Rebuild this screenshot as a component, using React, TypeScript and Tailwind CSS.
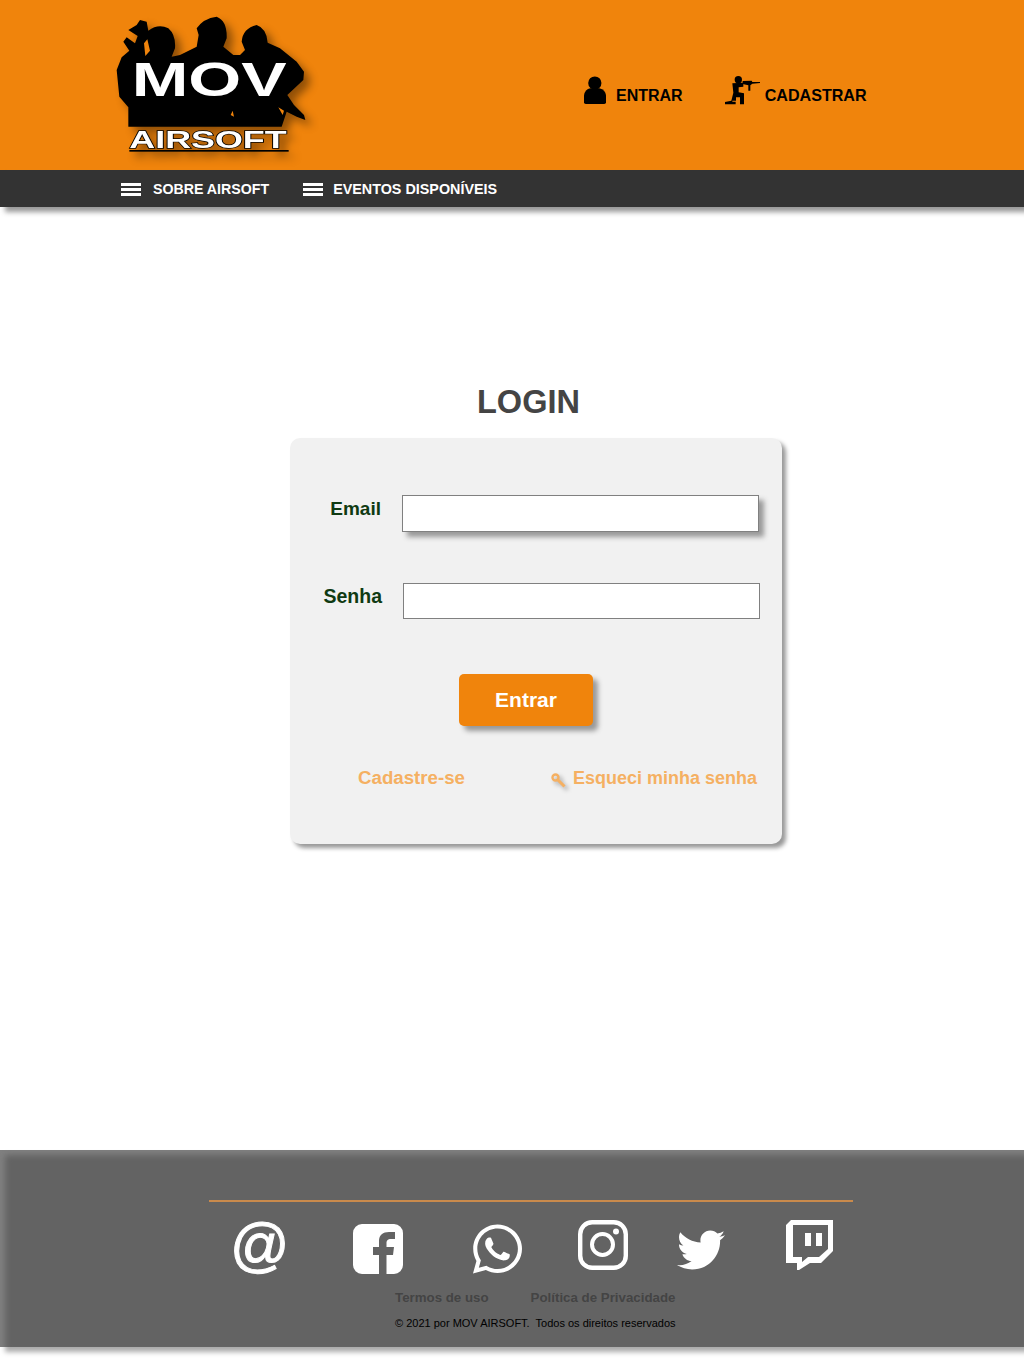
import { FaWhatsapp, FaTwitter } from "react-icons/fa";

const font = "font-['Liberation_Sans',Arial,sans-serif]";

// Logo: three soldiers in silhouette with the brand name over them
const Logo = () => (
  <svg viewBox="0 0 690 510" className="w-[230px] h-[170px] drop-shadow-[6px_6px_4px_rgba(0,0,0,0.4)]">
    <path d="M85 380 L85 322 L58 290 L50 210 L65 172 L88 152 L70 125 L80 112 L105 130 L113 108 L85 90 L110 75 L120 60 L140 65 L145 92 Q175 70 205 85 Q228 105 225 145 L215 170 L240 165 L290 140 L296 105 L290 85 Q310 55 350 50 Q382 62 380 115 L370 140 L400 165 L420 165 L435 150 L425 125 Q428 85 470 75 Q500 85 503 128 L540 145 L590 185 L612 215 L610 240 L562 285 L582 315 L612 345 L616 360 L590 350 L560 335 L545 380 Z" />
    <path d="M132 130 L142 118 L150 152 L136 168 Z M392 345 L398 332 L402 350 Z M535 322 L552 332 L548 345 Z" fill="#f0840c" />
    <text x="95" y="289" fill="#fff" fontFamily="Liberation Sans" fontWeight="700" fontSize="146" textLength="465" lengthAdjust="spacingAndGlyphs">
      MOV
    </text>
    <text x="88" y="445" fill="#fff" stroke="#000" strokeWidth="4" paintOrder="stroke" fontFamily="Liberation Sans" fontWeight="700" fontSize="70" textLength="472" lengthAdjust="spacingAndGlyphs">
      AIRSOFT
    </text>
    <rect x="88" y="450" width="478" height="5" />
  </svg>
);

const PersonIcon = () => (
  <svg viewBox="42 50 63 80" className="w-[22px] h-[28px]">
    <circle cx="73" cy="70" r="19" />
    <path d="M42 125 L42 105 Q45 88 60 85 L86 85 Q103 90 105 105 L105 125 Q105 130 100 130 L47 130 Q42 130 42 125Z" />
  </svg>
);

const SoldierIcon = () => (
  <svg viewBox="465 45 105 90" className="w-[35px] h-[30px]">
    <circle cx="505" cy="59" r="11" />
    <path d="M487 70 L520 68 L520 80 L506 82 L506 97 L522 100 L522 133 L510 133 L510 112 L498 112 L498 122 L487 122 L487 125 L497 125 L497 133 L465 133 L465 126 L484 122 L490 98 Z" />
    <path d="M518 63 L545 62 L547 66 L570 66 L570 69 L547 71 L541 76 L541 92 L535 92 L535 76 L518 72 Z" />
  </svg>
);

const KeyIcon = () => (
  <svg viewBox="0 0 16 16" className="w-4 h-4 drop-shadow-[3px_3px_2px_rgba(0,0,0,0.3)]">
    <circle cx="4.5" cy="4.5" r="3" fill="none" stroke="#f5b062" strokeWidth="2.4" />
    <path d="M6.5 6.5 L13.5 13.5" stroke="#f5b062" strokeWidth="3" />
  </svg>
);

const FacebookIcon = () => (
  <svg viewBox="0 0 50 50" className="ml-[69px] mt-[22px] w-[50px] h-[50px]">
    <path
      fill="#fff"
      fillRule="evenodd"
      d="M9 0 H41 A9 9 0 0 1 50 9 V41 A9 9 0 0 1 41 50 H9 A9 9 0 0 1 0 41 V9 A9 9 0 0 1 9 0 Z M26 50 V31 H20 V23 H26 V17 C26 11 30 8 36 8 H42 V15 H38 C34.5 15 33.5 17 33.5 19 V23 H41 L40 31 H33.5 V50 Z"
    />
  </svg>
);

const InstagramIcon = () => (
  <svg viewBox="0 0 50 50" className="ml-[56px] mt-[18px] w-[50px] h-[50px]">
    <rect x="2.2" y="2.2" width="45.6" height="45.6" rx="12" fill="none" stroke="#fff" strokeWidth="4.4" />
    <circle cx="24.5" cy="24.5" r="10.5" fill="none" stroke="#fff" strokeWidth="4" />
    <circle cx="38" cy="11.5" r="3" fill="#fff" />
  </svg>
);

const TwitchIcon = () => (
  <svg viewBox="0 0 48 50" className="ml-[61px] mt-[18px] w-[48px] h-[50px]">
    <path
      fill="#fff"
      fillRule="evenodd"
      d="M0 5 L5 0 H47 V31 L35 43 H24 L13 50 H11 V43 H0 Z M7 5 V37 H16 V42 L22 37 H33 L42 29 V5 Z"
    />
    <rect x="19" y="13" width="6" height="13" fill="#fff" />
    <rect x="30" y="13" width="6" height="13" fill="#fff" />
  </svg>
);

const Burger = () => (
  <div className="flex flex-col gap-[2px] w-5">
    <div className="h-[3px] bg-white" />
    <div className="h-[3px] bg-white" />
    <div className="h-[3px] bg-white" />
  </div>
);

export default function App() {
  return (
    <div className={`${font} w-[1024px] bg-white overflow-hidden h-[1358px]`}>
      <header className="h-[170px] bg-[#f0840c] flex items-start">
        <div className="ml-[100px]">
          <Logo />
        </div>
        <a className="ml-[254px] mt-[76px] flex items-start text-black">
          <PersonIcon />
          <span className="ml-[10px] mt-[11px] text-base leading-[18px] font-bold">ENTRAR</span>
        </a>
        <a className="ml-[42px] mt-[75px] flex items-start text-black">
          <SoldierIcon />
          <span className="ml-[5px] mt-[11px] text-[16.1px] leading-[18px] font-bold">CADASTRAR</span>
        </a>
      </header>

      <nav className="h-[37px] pt-[2px] bg-[#333333] flex items-center pl-[121px] text-white text-[14.2px] font-bold shadow-[5px_5px_5px_#999]">
        <Burger />
        <span className="ml-3">SOBRE AIRSOFT</span>
        <div className="ml-[34px]">
          <Burger />
        </div>
        <span className="ml-[10px] text-[14.35px]">EVENTOS DISPONÍVEIS</span>
      </nav>

      <main className="h-[943px] pt-[176px]">
        <h1 className="ml-[477px] text-[32.5px] leading-[38px] font-bold text-[#444444]">LOGIN</h1>
        <div className="mt-[17px] ml-[290px] w-[492px] h-[406px] bg-[#f1f1f1] rounded-[10px] shadow-[4px_4px_4px_#999] pt-[57px]">
          <div className="flex items-start">
            <label className="w-[91px] text-right text-[19px] leading-[22px] font-bold text-[#0f3a12] mt-[3px]">Email</label>
            <input type="text" className="ml-[21px] w-[357px] h-[37px] bg-white border border-[#808080] shadow-[5px_5px_5px_#999]" />
          </div>
          <div className="flex items-start mt-[51px]">
            <label className="w-[92px] text-right text-[19.5px] leading-[22px] font-bold text-[#0f3a12] mt-[2px]">Senha</label>
            <input type="password" className="ml-[21px] w-[357px] h-[36px] bg-white border border-[#808080]" />
          </div>
          <button className="block mt-[55px] ml-[169px] w-[134px] h-[52px] bg-[#f0840c] rounded-[5px] text-white text-[21px] font-bold shadow-[5px_5px_5px_#999]">
            Entrar
          </button>
          <div className="flex items-center mt-[41px] leading-[22px] font-bold text-[#f5b062]">
            <a className="ml-[68px] text-[18.7px]">Cadastre-se</a>
            <div className="ml-[86px] mt-[6px]">
              <KeyIcon />
            </div>
            <a className="ml-[6px] text-[18px]">Esqueci minha senha</a>
          </div>
        </div>
      </main>

      <footer className="h-[197px] bg-[#636363] shadow-[5px_5px_5px_#aaa,inset_5px_5px_6px_#808080] pt-[50px]">
        <div className="ml-[209px] w-[644px] h-[2px] bg-[#c98a4c]" />
        <div className="flex items-start text-white">
          <span className="ml-[230px] mt-[10px] w-[54px] text-[58.6px] leading-[66px] [-webkit-text-stroke:1px_white]">@</span>
          <FacebookIcon />
          <FaWhatsapp className="ml-[70px] mt-[19px] w-[49px] h-[56px]" />
          <InstagramIcon />
          <FaTwitter className="ml-[49px] mt-[23.5px] w-[48px] h-[48px]" />
          <TwitchIcon />
        </div>
        <div className="flex mt-[12px] ml-[395px] text-[13.3px] leading-[16px] font-bold text-[#444444]">
          <a>Termos de uso</a>
          <a className="ml-[42px]">Política de Privacidade</a>
        </div>
        <p className="mt-[10px] ml-[395px] text-[11px] leading-[14px] text-black whitespace-pre">© 2021 por MOV AIRSOFT.  Todos os direitos reservados</p>
      </footer>
    </div>
  );
}
